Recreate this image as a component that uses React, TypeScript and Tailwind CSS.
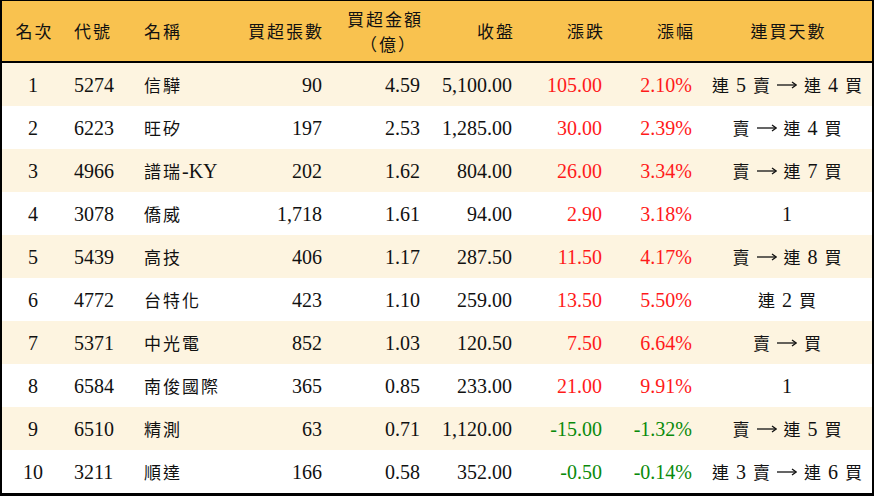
import React from "react";

type Row = {
  rank: string;
  code: string;
  name: string;
  vol: string;
  amt: string;
  close: string;
  chg: string;
  pct: string;
  days: string;
};

const rows: Row[] = [
  { rank: "1", code: "5274", name: "信驊", vol: "90", amt: "4.59", close: "5,100.00", chg: "105.00", pct: "2.10%", days: "連 5 賣 → 連 4 買" },
  { rank: "2", code: "6223", name: "旺矽", vol: "197", amt: "2.53", close: "1,285.00", chg: "30.00", pct: "2.39%", days: "賣 → 連 4 買" },
  { rank: "3", code: "4966", name: "譜瑞-KY", vol: "202", amt: "1.62", close: "804.00", chg: "26.00", pct: "3.34%", days: "賣 → 連 7 買" },
  { rank: "4", code: "3078", name: "僑威", vol: "1,718", amt: "1.61", close: "94.00", chg: "2.90", pct: "3.18%", days: "1" },
  { rank: "5", code: "5439", name: "高技", vol: "406", amt: "1.17", close: "287.50", chg: "11.50", pct: "4.17%", days: "賣 → 連 8 買" },
  { rank: "6", code: "4772", name: "台特化", vol: "423", amt: "1.10", close: "259.00", chg: "13.50", pct: "5.50%", days: "連 2 買" },
  { rank: "7", code: "5371", name: "中光電", vol: "852", amt: "1.03", close: "120.50", chg: "7.50", pct: "6.64%", days: "賣 → 買" },
  { rank: "8", code: "6584", name: "南俊國際", vol: "365", amt: "0.85", close: "233.00", chg: "21.00", pct: "9.91%", days: "1" },
  { rank: "9", code: "6510", name: "精測", vol: "63", amt: "0.71", close: "1,120.00", chg: "-15.00", pct: "-1.32%", days: "賣 → 連 5 買" },
  { rank: "10", code: "3211", name: "順達", vol: "166", amt: "0.58", close: "352.00", chg: "-0.50", pct: "-0.14%", days: "連 3 賣 → 連 6 買" },
];

const CJK = /[\u3000-\u9fff\uff00-\uffef]/;

function T({ s, track = true }: { s: string; track?: boolean }) {
  const parts = s.split(/([\u3000-\u9fff\uff00-\uffef]+)/);
  return (
    <>
      {parts.map((p, i) =>
        CJK.test(p) ? (
          <span
            key={i}
            className={track ? "text-[17px] tracking-[2px]" : "text-[17px]"}
            style={{ fontFamily: '"Noto Sans CJK TC", sans-serif' }}
          >
            {p}
          </span>
        ) : (
          <span key={i}>{p}</span>
        )
      )}
    </>
  );
}

function Days({ s }: { s: string }) {
  const tokens = s.split(" ");
  return (
    <div className="flex justify-center items-center gap-[7px] whitespace-nowrap">
      {tokens.map((t, i) =>
        t === "→" ? (
          <svg key={i} width="20" height="10" viewBox="0 0 20 10" className="mt-[1px]">
            <path d="M0 5 H19" stroke="#111" strokeWidth="1.3" />
            <path d="M15 2 L19.2 5 L15 8" stroke="#111" strokeWidth="1.3" fill="none" />
          </svg>
        ) : (
          <span key={i}>
            <T s={t} track={false} />
          </span>
        )
      )}
    </div>
  );
}

const grid = "grid grid-cols-[62px_70px_88px_110px_98px_92px_90px_90px_170px]";

export default function App() {
  return (
    <div
      className="w-[874px] h-[496px] bg-white text-[#111] text-[20px] leading-none border-l-2 border-r-2 border-t border-b-[3px] border-black overflow-hidden"
      style={{ fontFamily: '"Liberation Serif", "Noto Sans CJK TC", serif' }}
    >
      <div className={`${grid} h-[62px] bg-[#F9C24F] border-b-2 border-black items-center whitespace-nowrap`}>
        <div className="text-center pl-[3px]"><T s="名次" /></div>
        <div className="pl-[10px]"><T s="代號" /></div>
        <div className="pl-[10px]"><T s="名稱" /></div>
        <div className="text-right pr-[8px]"><T s="買超張數" /></div>
        <div className="text-right pr-[7px] flex flex-col items-end gap-[5px]">
          <div><T s="買超金額" /></div>
          <div className="pr-[6px]"><T s="（億）" /></div>
        </div>
        <div className="text-right pr-[7px]"><T s="收盤" /></div>
        <div className="text-right pr-[7px]"><T s="漲跌" /></div>
        <div className="text-right pr-[7px]"><T s="漲幅" /></div>
        <div className="text-center pl-[3px]"><T s="連買天數" /></div>
      </div>
      {rows.map((r, i) => {
        const neg = r.chg.startsWith("-");
        const color = neg ? "text-[#0a8a0a]" : "text-[#ff1a1a]";
        return (
          <div
            key={r.rank}
            className={`${grid} h-[43px] items-center whitespace-nowrap ${i % 2 === 0 ? "bg-[#FDF4E0]" : "bg-white"}`}
          >
            <div className="text-center">{r.rank}</div>
            <div className="pl-[10px]">{r.code}</div>
            <div className="pl-[10px]"><T s={r.name} /></div>
            <div className="text-right pr-[10px]">{r.vol}</div>
            <div className="text-right pr-[10px]">{r.amt}</div>
            <div className="text-right pr-[10px]">{r.close}</div>
            <div className={`text-right pr-[10px] ${color}`}>{r.chg}</div>
            <div className={`text-right pr-[10px] ${color}`}>{r.pct}</div>
            <Days s={r.days} />
          </div>
        );
      })}
    </div>
  );
}
